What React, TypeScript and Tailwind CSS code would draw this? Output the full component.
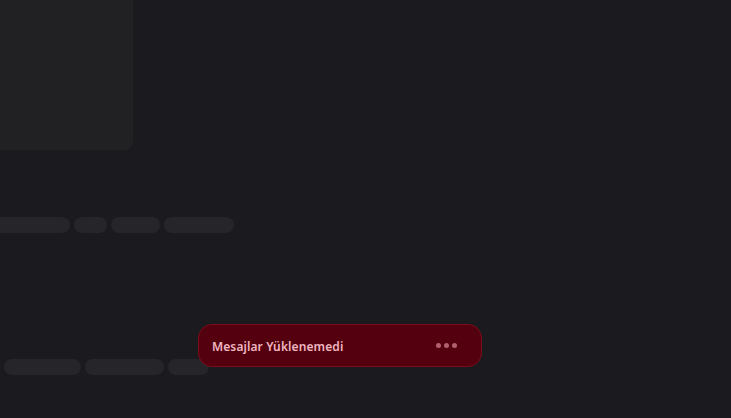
import React from 'react';

const Pill: React.FC<{ w: string }> = ({ w }) => <div className={`h-4 rounded-full bg-[#26262a] ${w}`} />;

export default function App() {
  return (
    <div className="relative h-[418px] w-[731px] overflow-hidden bg-[#1b1b1f] font-['Noto_Sans',sans-serif]">
      <div className="flex flex-col">
        {/* media placeholder */}
        <div className="h-[150px] w-[133px] rounded-br-lg bg-[#212124]" />

        <div className="ml-[-10px] mt-[67px] flex gap-1">
          <Pill w="w-[80px]" />
          <Pill w="w-[33px]" />
          <Pill w="w-[49px]" />
          <Pill w="w-[70px]" />
        </div>

        <div className="ml-1 mt-[126px] flex gap-1">
          <Pill w="w-[77px]" />
          <Pill w="w-[79px]" />
          <Pill w="w-[41px]" />
        </div>
      </div>

      {/* error toast */}
      <div className="absolute left-[198px] top-[324px] flex h-[43px] w-[284px] items-center justify-between rounded-[14px] border border-[#7c0c1c] bg-[#54000f] pl-[13px] pr-[24px]">
        <span className="pt-[2px] text-[12px] font-semibold tracking-[0.1px] text-[#f0b6c0]">Mesajlar Yüklenemedi</span>
        <div className="flex gap-[3px]">
          <span className="h-[5px] w-[5px] rounded-full bg-[#b0606e]" />
          <span className="h-[5px] w-[5px] rounded-full bg-[#b0606e]" />
          <span className="h-[5px] w-[5px] rounded-full bg-[#b0606e]" />
        </div>
      </div>
    </div>
  );
}
